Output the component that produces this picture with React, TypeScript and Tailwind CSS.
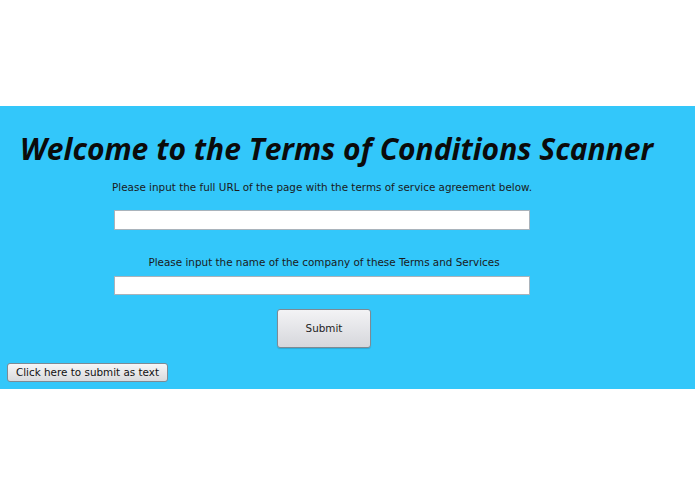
import { useState } from "react";

const App = () => {
  const [url, setUrl] = useState("");
  const [company, setCompany] = useState("");

  return (
    <div className="w-[695px] h-[494px] bg-white flex flex-col" style={{ fontFamily: '"DejaVu Sans", sans-serif' }}>
      <div className="h-[106px] shrink-0" />
      <section className="h-[283px] shrink-0 bg-[#33c7fa] flex flex-col">
        <h1
          className="pl-[20px] pt-[24px] h-[66px] text-[30px] leading-[38px] font-bold italic text-[#0b0b0b] whitespace-nowrap"
          style={{ fontFamily: '"Open Sans", sans-serif' }}
        >
          Welcome to the Terms of Conditions Scanner
        </h1>
        <div className="ml-[114px] w-[416px] flex flex-col items-center">
          <p className="text-[10.4px] leading-[14px] text-[#1a1a1a] mt-[8px] whitespace-nowrap">
            Please input the full URL of the page with the terms of service agreement below.
          </p>
          <input
            autoFocus
            value={url}
            onChange={(e) => setUrl(e.target.value)}
            className="mt-[16px] w-full h-[20px] bg-white border border-[#a9b3bb] px-[3px] text-[11px] outline-none caret-black"
          />
          <p className="text-[10.4px] leading-[14px] text-[#1a1a1a] mt-[25px] ml-[4px] whitespace-nowrap">
            Please input the name of the company of these Terms and Services
          </p>
          <input
            value={company}
            onChange={(e) => setCompany(e.target.value)}
            className="mt-[7px] w-full h-[19px] bg-white border border-[#a9b3bb] px-[3px] text-[11px] outline-none"
          />
          <button className="mt-[14px] ml-[4px] w-[94px] h-[39px] rounded-[3px] border border-[#7d8a94] bg-gradient-to-b from-[#f3f3f5] to-[#d6d7dc] text-[10.4px] text-[#222] shadow-[0_1px_1px_rgba(0,0,0,0.15)]">
            Submit
          </button>
        </div>
        <div className="pl-[7px] mt-[15px] flex">
          <button className="w-[161px] h-[19px] rounded-[3px] border border-[#7d8a94] bg-gradient-to-b from-[#f6f6f7] to-[#d9dadd] text-[10.4px] leading-[17px] text-[#111]">
            Click here to submit as text
          </button>
        </div>
      </section>
    </div>
  );
};

export default App;
